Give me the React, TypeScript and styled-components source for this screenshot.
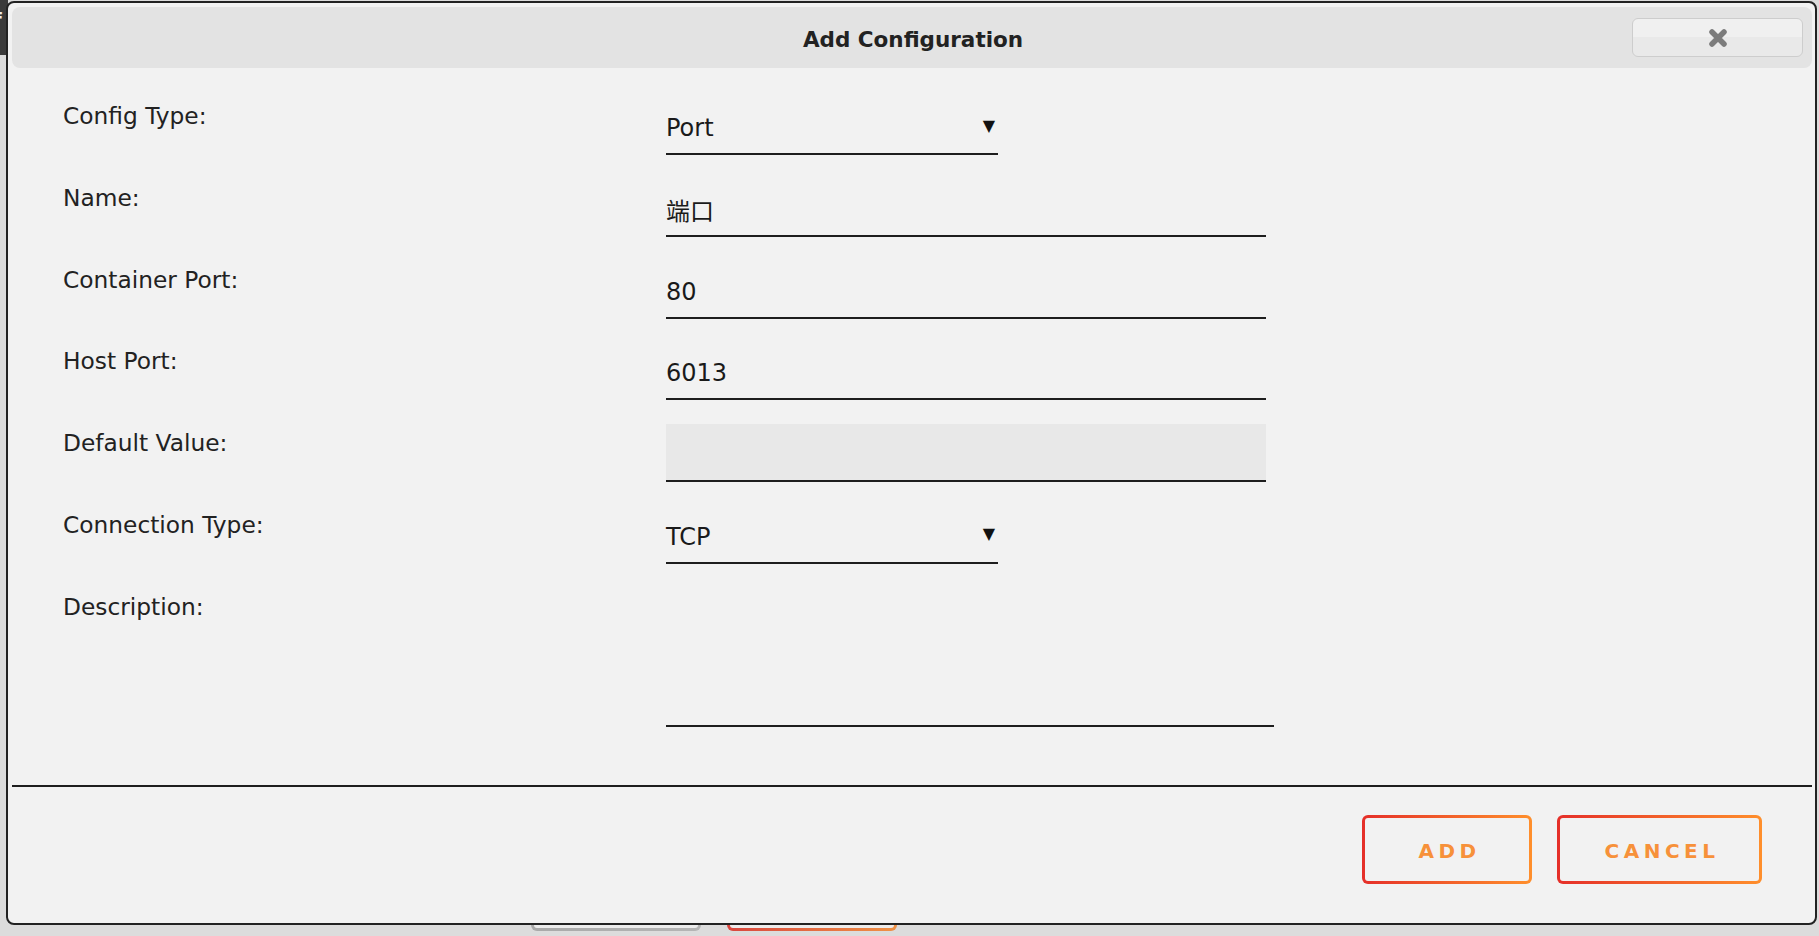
import React from 'react'
import styled, { createGlobalStyle } from 'styled-components';

const GlobalStyle = createGlobalStyle`
    html, body {
        margin: 0;
        padding: 0;
        background: #dcdcdc;
        font-family: "DejaVu Sans", "Noto Sans CJK SC", sans-serif;
    }
`

const Page = styled.div`
    position: relative;
    height: 936px;
    display: flex;
    flex-direction: column;
    overflow: hidden;
`

const Header = styled.div`
    height: 55px;
    width: 8px;
    background-color: #3a3a3a;
    color: #eee;
    font-size: 20px;
    font-weight: bold;
    line-height: 40px;
    text-indent: -7px;
`

const PageButtons = styled.div`
    margin-top: auto;
    display: flex;
    gap: 26px;
    padding: 0 0 5px 531px;
`

const PageButton = styled.div<{ gray?: boolean }>`
    width: 170px;
    height: 61px;
    box-sizing: border-box;
    border: 3px solid transparent;
    border-radius: 6px;
    background: ${({ gray }) => gray
        ? 'linear-gradient(#ececec, #ececec) padding-box, linear-gradient(90deg, #a9a9a9, #b5b5b5) border-box'
        : 'linear-gradient(#ececec, #ececec) padding-box, linear-gradient(90deg, #d9463f, #ef9246) border-box'};
`

const Dialog = styled.div`
    position: absolute;
    left: 6px;
    top: 1px;
    width: 1811px;
    height: 924px;
    box-sizing: border-box;
    border: 2px solid #222;
    border-radius: 8px;
    background-color: #f2f2f2;
    display: flex;
    flex-direction: column;
`

const TitleBar = styled.div`
    position: relative;
    margin: 4px 3px 0 4px;
    height: 61px;
    border-radius: 8px;
    background-color: #e3e3e3;
    display: flex;
    align-items: center;
    justify-content: center;
`

const Title = styled.div`
    font-size: 21.5px;
    font-weight: bold;
    color: #222;
    padding: 3px 0 0 2px;
`

const CloseButton = styled.div`
    position: absolute;
    right: 9px;
    top: 11px;
    width: 171px;
    height: 39px;
    box-sizing: border-box;
    border: 1px solid #cdcdcd;
    border-radius: 6px;
    background: linear-gradient(#f0f0f0 0%, #f0f0f0 50%, #e9e9e9 50%, #e9e9e9 100%);
    display: flex;
    align-items: center;
    justify-content: center;
`

const Form = styled.div`
    flex: 1;
    padding: 29px 0 0 55px;
`

const Row = styled.div`
    display: grid;
    grid-template-columns: 603px auto;
    margin-bottom: 23.8px;
`

const Label = styled.div`
    padding-top: 5px;
    font-size: 23.3px;
    line-height: 28px;
    color: #222;
`

const Field = styled.div<{ width: number; height?: number; filled?: boolean }>`
    width: ${({ width }) => width}px;
    height: ${({ height }) => height || 58}px;
    box-sizing: border-box;
    padding-top: 6px;
    border-bottom: 2px solid #1e1e1e;
    background-color: ${({ filled }) => filled ? '#e8e8e8' : 'transparent'};
    display: flex;
    align-items: center;
    justify-content: space-between;
    font-size: 24px;
    color: #1a1a1a;
`

const Arrow = styled.span`
    font-size: 16px;
    margin: -6px 3px 0 0;
    color: #111;
`

const Separator = styled.div`
    height: 2px;
    margin: 0 3px 0 4px;
    background-color: #1e1e1e;
`

const Footer = styled.div`
    height: 136px;
    box-sizing: border-box;
    padding: 28px 53px 0 0;
    display: flex;
    justify-content: flex-end;
    align-items: flex-start;
    gap: 25px;
`

const ActionButton = styled.div<{ width: number }>`
    width: ${({ width }) => width}px;
    height: 69px;
    box-sizing: border-box;
    border: 3px solid transparent;
    border-radius: 6px;
    background: linear-gradient(#f2f2f2, #f2f2f2) padding-box, linear-gradient(90deg, #e52f29, #ff8f2c) border-box;
    display: flex;
    align-items: center;
    justify-content: center;
    padding: 2px 0 0 5px;
    font-size: 20px;
    font-weight: bold;
    letter-spacing: 4.5px;
    color: #f7913a;
`

type FieldRow = {
    label: string;
    value?: string;
    kind: 'select' | 'text' | 'disabled' | 'area';
};

const rows: FieldRow[] = [
    { label: 'Config Type:', value: 'Port', kind: 'select' },
    { label: 'Name:', value: '端口', kind: 'text' },
    { label: 'Container Port:', value: '80', kind: 'text' },
    { label: 'Host Port:', value: '6013', kind: 'text' },
    { label: 'Default Value:', kind: 'disabled' },
    { label: 'Connection Type:', value: 'TCP', kind: 'select' },
    { label: 'Description:', kind: 'area' },
];

const renderField = (row: FieldRow) => {
    if (row.kind === 'select') {
        return (
            <Field width={332}>
                <span>{row.value}</span>
                <Arrow>▼</Arrow>
            </Field>
        )
    }
    if (row.kind === 'disabled') return <Field width={600} filled />
    if (row.kind === 'area') return <Field width={608} height={139} />
    return <Field width={600}><span>{row.value}</span></Field>
}

const App = () => {
    return (
        <Page>
            <GlobalStyle />
            <Header>f</Header>
            <PageButtons>
                <PageButton gray />
                <PageButton />
            </PageButtons>

            <Dialog>
                <TitleBar>
                    <Title>Add Configuration</Title>
                    <CloseButton>
                        <svg width="22" height="22" viewBox="0 0 22 22">
                            <path d="M5 5 L17 17 M17 5 L5 17" stroke="#7c7c7c" strokeWidth="5.5" strokeLinecap="round" />
                        </svg>
                    </CloseButton>
                </TitleBar>

                <Form>
                    {rows.map((row) => (
                        <Row key={row.label}>
                            <Label>{row.label}</Label>
                            {renderField(row)}
                        </Row>
                    ))}
                </Form>

                <Separator />

                <Footer>
                    <ActionButton width={170}>ADD</ActionButton>
                    <ActionButton width={205}>CANCEL</ActionButton>
                </Footer>
            </Dialog>
        </Page>
    )
};

export default App
